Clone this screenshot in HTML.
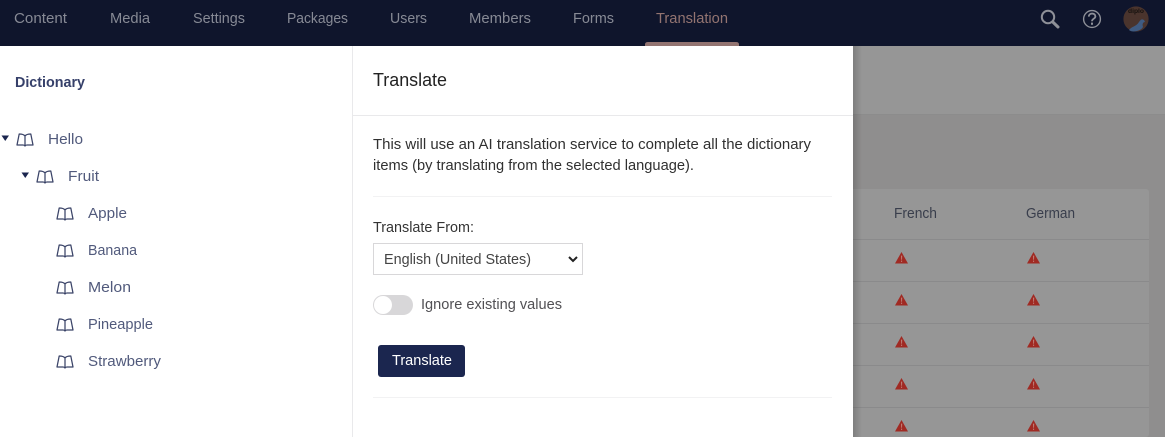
<!DOCTYPE html>
<html lang="en">
<head>
<meta charset="utf-8">
<title>Translate</title>
<style>
html,body{margin:0;padding:0;width:1165px;height:437px;overflow:hidden;background:#fff}
svg{display:block;font-size:15px}
text{font-family:"Liberation Sans",Arial,sans-serif}
.nav{fill:#878a95}
.tree{fill:#515a7c}
.body{fill:#303030}
.lbl{fill:#343434}
</style>
</head>
<body>
<svg xmlns="http://www.w3.org/2000/svg" width="1165" height="437" viewBox="0 0 1165 437">
<defs>
<linearGradient id="sh" x1="0" x2="1" y1="0" y2="0">
<stop offset="0" stop-color="#000" stop-opacity=".16"/>
<stop offset="1" stop-color="#000" stop-opacity="0"/>
</linearGradient>
<g id="book" fill="none" stroke="#3b4468" stroke-width="1.250" stroke-linejoin="round">
<path d="M9 3C8 1.600 6 1 3.200 1L1 12H7C8 12 8.600 12.400 9 13C9.400 12.400 10 12 11 12H17L14.800 1C12 1 10 1.600 9 3V13"/>
</g>
<g id="warn">
<path d="M6.500 0L13 11.500H0Z" fill="#a02a23"/>
<path d="M6 3.600H7.200L7 7.800H6.200ZM6 8.600H7.100V9.900H6Z" fill="#c08079"/>
</g>
</defs>

<!-- dimmed backdrop -->
<rect x="853" y="46" width="312" height="391" fill="#8f8e8e"/>
<rect x="853" y="46" width="312" height="69" fill="#969696"/>
<rect x="853" y="114" width="312" height="1" fill="#8c8c8c"/>
<rect x="820" y="189" width="329" height="248" rx="3" fill="#969696"/>
<g fill="#8a8a8b">
<rect x="853" y="239" width="296" height="1"/>
<rect x="853" y="281" width="296" height="1"/>
<rect x="853" y="323" width="296" height="1"/>
<rect x="853" y="365" width="296" height="1"/>
<rect x="853" y="407" width="296" height="1"/>
</g>
<text x="894" y="218" fill="#393e4c" font-size="14.500" textLength="43" lengthAdjust="spacingAndGlyphs">French</text>
<text x="1026" y="218" fill="#393e4c" font-size="14.500" textLength="49" lengthAdjust="spacingAndGlyphs">German</text>
<use href="#warn" x="895" y="252"/><use href="#warn" x="1027" y="252"/>
<use href="#warn" x="895" y="294"/><use href="#warn" x="1027" y="294"/>
<use href="#warn" x="895" y="336"/><use href="#warn" x="1027" y="336"/>
<use href="#warn" x="895" y="378"/><use href="#warn" x="1027" y="378"/>
<use href="#warn" x="895" y="420"/><use href="#warn" x="1027" y="420"/>
<rect x="853" y="46" width="9" height="391" fill="url(#sh)"/>

<!-- top nav -->
<rect width="1165" height="46" fill="#0f152c"/>
<text class="nav" x="14" y="23" textLength="53" lengthAdjust="spacingAndGlyphs">Content</text>
<text class="nav" x="110" y="23" textLength="40" lengthAdjust="spacingAndGlyphs">Media</text>
<text class="nav" x="193" y="23" textLength="52" lengthAdjust="spacingAndGlyphs">Settings</text>
<text class="nav" x="287" y="23" textLength="61" lengthAdjust="spacingAndGlyphs">Packages</text>
<text class="nav" x="390" y="23" textLength="37" lengthAdjust="spacingAndGlyphs">Users</text>
<text class="nav" x="469" y="23" textLength="62" lengthAdjust="spacingAndGlyphs">Members</text>
<text class="nav" x="573" y="23" textLength="41" lengthAdjust="spacingAndGlyphs">Forms</text>
<text x="656" y="23" fill="#937471" textLength="72" lengthAdjust="spacingAndGlyphs">Translation</text>
<path d="M645 46V44.500Q645 42 648 42H736Q739 42 739 44.500V46Z" fill="#937471"/>

<!-- nav icons -->
<g fill="none" stroke="#8e9098">
<circle cx="1048" cy="17" r="6.200" stroke-width="2"/>
<path d="M1052.800 22L1058 27" stroke-width="3" stroke-linecap="round"/>
<circle cx="1092" cy="19" r="8.400" stroke-width="1.400"/>
<path d="M1088.800 16.600C1088.800 12.600 1095.400 12.600 1095.400 16.400C1095.400 18.800 1092 18.600 1092 21.200" stroke-width="1.800"/>
</g>
<rect x="1091" y="22.600" width="2" height="2.200" fill="#8e9098"/>
<circle cx="1136" cy="19" r="12.600" fill="#4a342d"/>
<path d="M1129 30C1132 26 1136 27 1139 22C1141 19 1142 19 1144 20L1145 22C1143 22 1142 24 1143 27C1141 31 1132 33 1129 30Z" fill="#3f5b82"/>
<text x="1128" y="13" fill="#15110e" font-size="6.500" font-weight="bold" textLength="16" lengthAdjust="spacingAndGlyphs">diplo</text>

<!-- left tree panel -->
<rect x="0" y="46" width="352" height="391" fill="#fff"/>
<rect x="352" y="46" width="1" height="391" fill="#e9e9eb"/>
<text x="15" y="87" fill="#36406a" font-weight="bold" font-size="14.500" textLength="70" lengthAdjust="spacingAndGlyphs">Dictionary</text>

<path d="M1.500 135.500H9L5.250 141Z" fill="#1b264f"/>
<path d="M21.500 172.500H29L25.250 178Z" fill="#1b264f"/>
<use href="#book" x="16" y="133"/>
<use href="#book" x="36" y="170"/>
<use href="#book" x="56" y="207"/>
<use href="#book" x="56" y="244"/>
<use href="#book" x="56" y="281"/>
<use href="#book" x="56" y="318"/>
<use href="#book" x="56" y="355"/>
<text class="tree" x="48" y="144" textLength="35" lengthAdjust="spacingAndGlyphs">Hello</text>
<text class="tree" x="68" y="181" textLength="31" lengthAdjust="spacingAndGlyphs">Fruit</text>
<text class="tree" x="88" y="218" textLength="39" lengthAdjust="spacingAndGlyphs">Apple</text>
<text class="tree" x="88" y="255" textLength="49" lengthAdjust="spacingAndGlyphs">Banana</text>
<text class="tree" x="88" y="292" textLength="43" lengthAdjust="spacingAndGlyphs">Melon</text>
<text class="tree" x="88" y="329" textLength="65" lengthAdjust="spacingAndGlyphs">Pineapple</text>
<text class="tree" x="88" y="366" textLength="73" lengthAdjust="spacingAndGlyphs">Strawberry</text>

<!-- dialog -->
<rect x="353" y="46" width="500" height="391" fill="#fff"/>
<rect x="353" y="115" width="500" height="1" fill="#e9e9eb"/>
<text x="373" y="86" fill="#222" font-size="18" textLength="74" lengthAdjust="spacingAndGlyphs">Translate</text>
<text class="body" x="373" y="149" font-size="14.500" textLength="438" lengthAdjust="spacingAndGlyphs">This will use an AI translation service to complete all the dictionary</text>
<text class="body" x="373" y="170" font-size="14.500" textLength="321" lengthAdjust="spacingAndGlyphs">items (by translating from the selected language).</text>
<rect x="373" y="196" width="459" height="1" fill="#f2f2f3"/>
<text class="lbl" x="373" y="232" font-size="14.500" textLength="101" lengthAdjust="spacingAndGlyphs">Translate From:</text>
<rect x="373.500" y="243.500" width="209" height="31" fill="#fff" stroke="#d8d7d9"/>
<text x="384" y="264" fill="#444" font-size="14.500" textLength="147" lengthAdjust="spacingAndGlyphs">English (United States)</text>
<path d="M569 257L573 261L577 257" fill="none" stroke="#222" stroke-width="2"/>
<rect x="373" y="295" width="40" height="20" rx="10" fill="#d8d7d9"/>
<circle cx="383" cy="305" r="9" fill="#fff"/>
<text x="421" y="309" fill="#515054" font-size="14.500" textLength="141" lengthAdjust="spacingAndGlyphs">Ignore existing values</text>
<rect x="378" y="345" width="87" height="32" rx="3" fill="#1b264f"/>
<text x="392" y="365" fill="#fff" font-size="14.500" textLength="60" lengthAdjust="spacingAndGlyphs">Translate</text>
<rect x="373" y="397" width="459" height="1" fill="#f2f2f3"/>
</svg>
</body>
</html>
